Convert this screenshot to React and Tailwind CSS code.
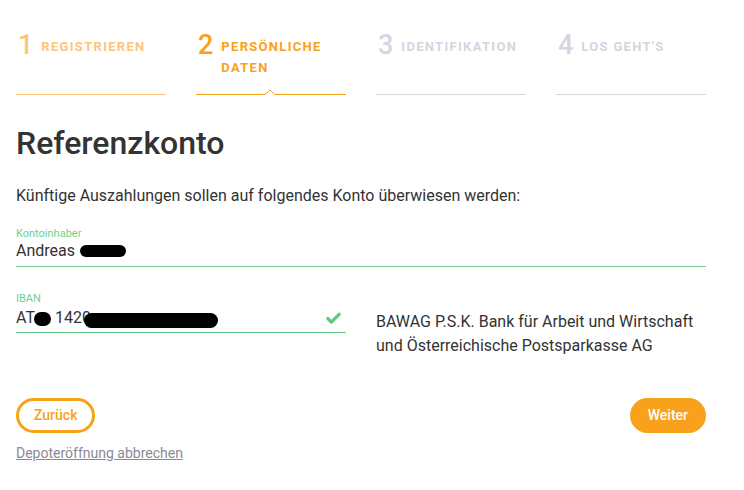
import { Check } from 'lucide-react';

const STEPS = [
  { n: 1, label: 'Registrieren', state: 'done' },
  { n: 2, label: 'Persönliche Daten', state: 'active' },
  { n: 3, label: 'Identifikation', state: 'todo' },
  { n: 4, label: "Los geht's", state: 'todo' },
];

function Step({ step }) {
  const color =
    step.state === 'done'
      ? 'text-[#fcc57e]'
      : step.state === 'active'
      ? 'text-[#f9a11b]'
      : 'text-[#d6d4df]';
  const line =
    step.state === 'done'
      ? 'bg-[#fcc57e]'
      : step.state === 'active'
      ? 'bg-[#f9a11b]'
      : 'bg-[#d6d4df]';
  return (
    <div className="flex flex-col">
      <div className={`flex items-start gap-[8px] h-[63px] ${color}`}>
        <span className="text-[27px] leading-[28px] font-medium pl-[2px]">{step.n}</span>
        <span className="text-[13px] font-bold uppercase tracking-[0.1em] leading-[21px] pt-[5px] w-[112px]">
          {step.label}
        </span>
      </div>
      {step.state === 'active' ? (
        <svg width="150" height="6" viewBox="0 0 150 6" className="block -mt-[5px]">
          <polyline
            points="0,5.5 69,5.5 74,1 79,5.5 150,5.5"
            fill="none"
            stroke="#f9a11b"
            strokeWidth="1"
          />
        </svg>
      ) : (
        <div className={`h-px ${line}`} />
      )}
    </div>
  );
}

export default function App() {
  return (
    <div className="w-[744px] h-[490px] bg-white px-4 pt-[31px] font-['Roboto',sans-serif] text-[#333333]">
      <div className="grid grid-cols-4 gap-[30px] w-[690px]">
        {STEPS.map((s) => (
          <Step key={s.n} step={s} />
        ))}
      </div>

      <h1 className="mt-[30px] text-[32px] leading-[36px] font-medium text-[#333]">Referenzkonto</h1>

      <p className="mt-[24px] text-[16px] leading-[22px]">
        Künftige Auszahlungen sollen auf folgendes Konto überwiesen werden:
      </p>

      <div className="mt-[20px] w-[690px] border-b border-[#79c596] pb-[4px]">
        <div className="text-[11px] leading-[13px] text-[#6fcf8f]">Kontoinhaber</div>
        <div className="text-[16px] leading-[22px] flex items-center">
          Andreas
          <span className="ml-[5px] inline-block w-[46px] h-[12px] rounded-full bg-black" />
        </div>
      </div>

      <div className="mt-[25px] flex items-start gap-[30px]">
        <div className="w-[330px] border-b border-[#5dcb7e] pb-[1px]">
          <div className="text-[11px] leading-[13px] text-[#6fcf8f]">IBAN</div>
          <div className="flex items-center justify-between text-[16px] leading-[26px]">
            <span className="flex items-center">
              AT
              <span className="inline-block w-[17px] h-[14px] rounded-full bg-black -ml-[1px] mt-[2px]" />
              <span className="ml-[4px]">1420</span>
              <span className="inline-block w-[134px] h-[15px] rounded-full bg-black -ml-[7px] mt-[5px]" />
            </span>
            <Check className="w-[17px] h-[17px] text-[#5dcb7e] mr-[4px]" strokeWidth={4.5} />
          </div>
        </div>
        <div className="pt-[18px] text-[16px] leading-[24px] text-[#333]">
          BAWAG P.S.K. Bank für Arbeit und Wirtschaft
          <br />
          und Österreichische Postsparkasse AG
        </div>
      </div>

      <div className="mt-[40px] w-[690px] flex justify-between items-center">
        <button className="h-[35px] px-[15px] rounded-full border-[3px] border-[#f9a11b] text-[#f9a11b] text-[14px] font-medium">
          Zurück
        </button>
        <button className="h-[35px] px-[18px] rounded-full bg-[#f9a11b] text-white text-[14px] font-medium">
          Weiter
        </button>
      </div>

      <a href="#" className="block mt-[11px] text-[14px] leading-[18px] text-[#8a8a96] underline">
        Depoteröffnung abbrechen
      </a>
    </div>
  );
}
